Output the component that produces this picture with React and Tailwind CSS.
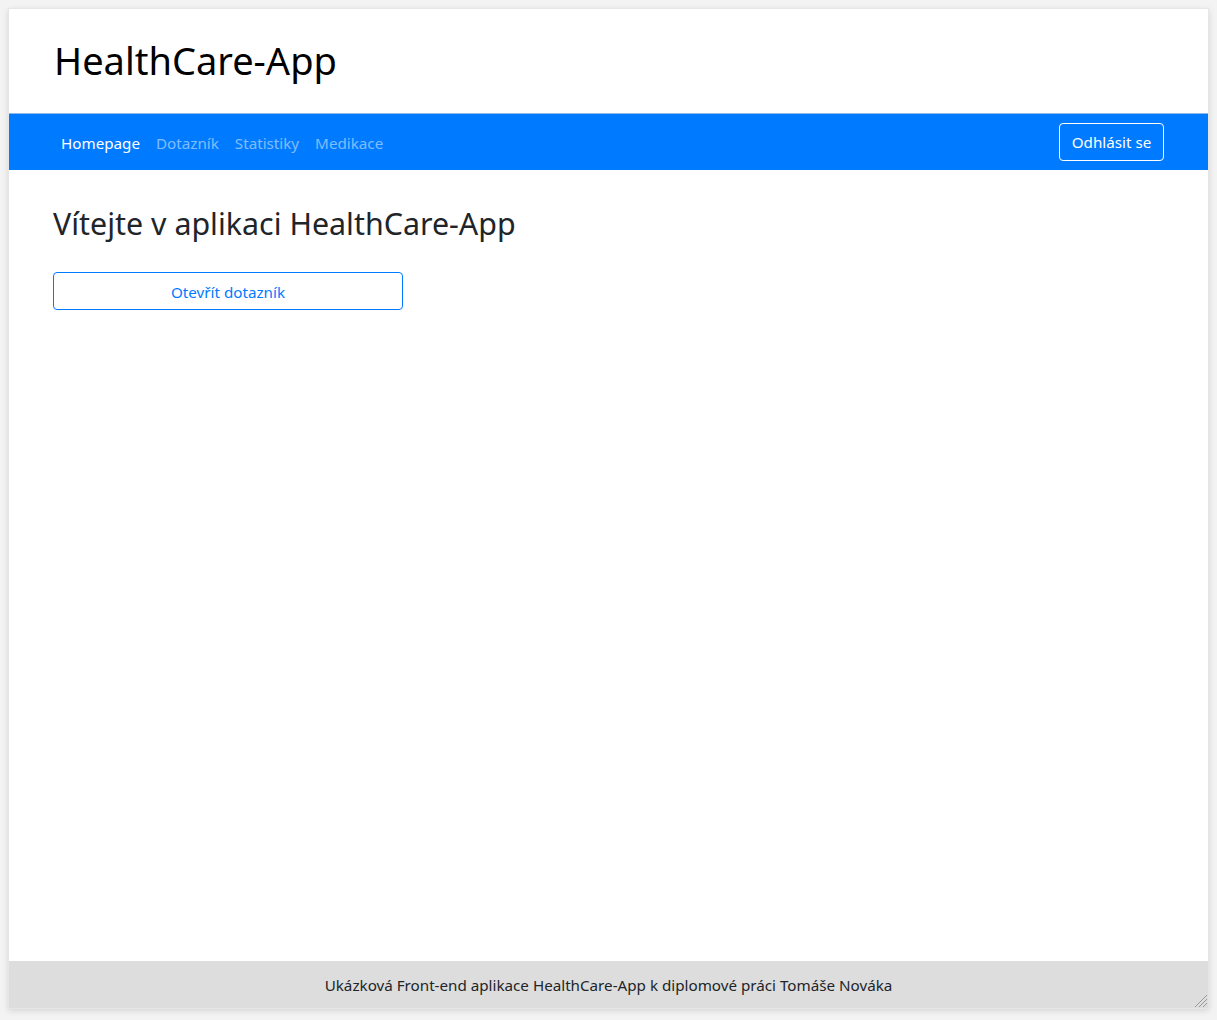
export default function App() {
  const links = ["Homepage", "Dotazník", "Statistiky", "Medikace"];

  return (
    <div className="min-h-screen bg-[#f3f3f3] p-2" style={{ fontFamily: '"Noto Sans", "Open Sans", sans-serif' }}>
      <div className="relative flex flex-col h-[1001px] bg-white border border-[#e6e6e6] shadow-[0_2px_6px_rgba(0,0,0,0.12)]">
        {/* HEADER */}
        <header className="h-[104px] flex items-center px-[45px]">
          <h1 className="text-[38px] leading-[1.2] text-black">HealthCare-App</h1>
        </header>

        {/* NAV */}
        <nav className="h-[57px] flex items-center justify-between pl-[44px] pr-[44px] bg-[#007bff] border-t border-[#8fb8e6]">
          <ul className="flex pt-[2px]">
            {links.map((l, i) => (
              <li key={l}>
                <a className={`block px-2 text-[15.2px] ${i === 0 ? "text-white" : "text-white/50"}`}>{l}</a>
              </li>
            ))}
          </ul>
          <button className="h-[38px] w-[105px] rounded border border-white text-white text-[15.2px]">Odhlásit se</button>
        </nav>

        {/* CONTENT */}
        <main className="flex-1 px-[44px] pt-[36px]">
          <h2 className="text-[30.4px] leading-[1.2] text-[#212529] mb-[30px]">Vítejte v aplikaci HealthCare-App</h2>
          <button className="w-[350px] h-[38px] pt-[1px] rounded border border-[#007bff] text-[#007bff] text-[15.2px]">Otevřít dotazník</button>
        </main>

        {/* FOOTER */}
        <footer className="h-[47px] flex items-center justify-center pt-[2px] bg-[#dddddd] text-[15.2px] text-[#212529]">
          Ukázková Front-end aplikace HealthCare-App k diplomové práci Tomáše Nováka
        </footer>

        <svg className="absolute right-[1px] bottom-[1px]" width="13" height="13" viewBox="0 0 13 13">
          <g stroke="#9a9a9a" strokeWidth="1">
            <line x1="1" y1="13" x2="13" y2="1" />
            <line x1="5" y1="13" x2="13" y2="5" />
            <line x1="9" y1="13" x2="13" y2="9" />
          </g>
        </svg>
      </div>
    </div>
  );
}
